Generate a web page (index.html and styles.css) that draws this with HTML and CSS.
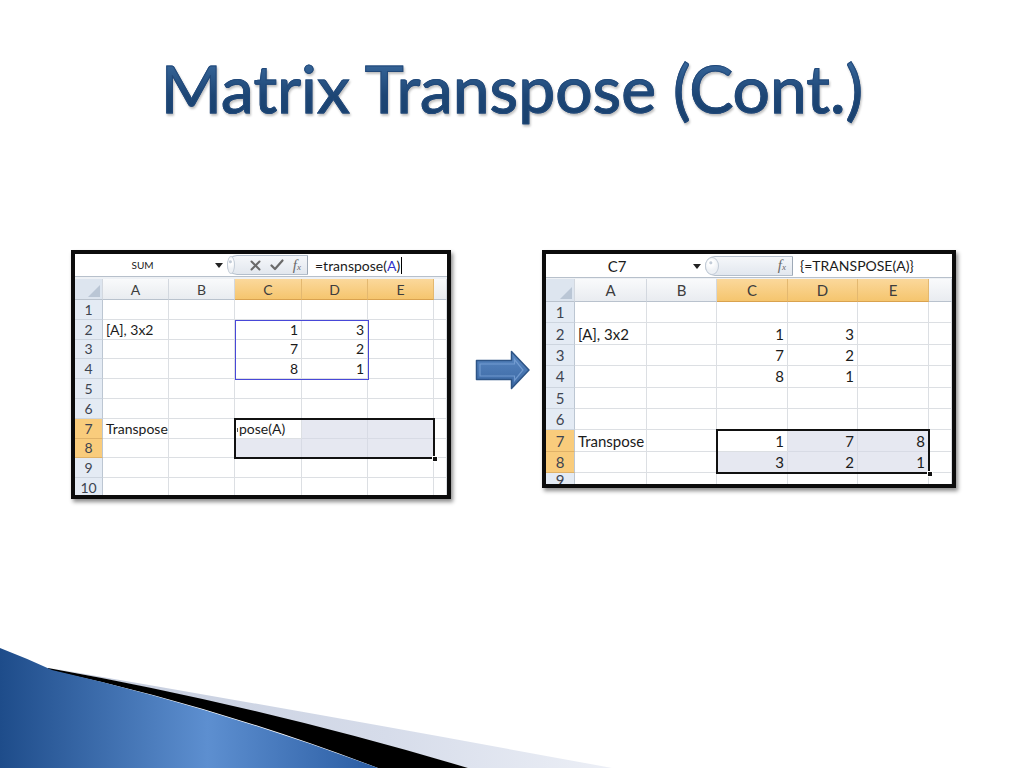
FILE: index.html
```html
<!DOCTYPE html>
<html lang="en">
<head>
    <meta charset="UTF-8">
    <meta name="viewport" content="width=device-width, initial-scale=1.0">
    <title>Matrix Transpose (Cont.)</title>
    <link rel="stylesheet" href="styles.css">
</head>
<body>

<div class="slide">
    <h1 class="title">Matrix Transpose (Cont.)</h1>

    <div class="stage">
        <!-- before: typing the formula -->
        <div class="sheet sheet-a">
            <div class="fbar">
                <div class="namebox small">SUM</div>
                <div class="nb-arrow"><svg width="8" height="5" viewBox="0 0 8 5"><path d="M0 0h8L4 5z" fill="#222"/></svg></div>
                <div class="pill">
                    <span class="knob"></span>
                    <svg class="ico" width="11" height="11" viewBox="0 0 11 11"><path d="M1.5 1.5l8 8M9.5 1.5l-8 8" stroke="#6a6a6a" stroke-width="2" stroke-linecap="round"/></svg>
                    <svg class="ico" width="14" height="12" viewBox="0 0 14 12"><path d="M1.5 6.5l3.5 3.5L12.5 1.5" fill="none" stroke="#6a6a6a" stroke-width="2.2" stroke-linecap="round" stroke-linejoin="round"/></svg>
                    <span class="fx">f<sub>x</sub></span>
                </div>
                <div class="formula">=transpose(<span class="ref">A</span>)<span class="caret"></span></div>
            </div>
            <div class="sep"></div>
            <div class="grid grid-a">
                <div class="hd corner"></div><div class="hd">A</div><div class="hd">B</div><div class="hd sel">C</div><div class="hd sel">D</div><div class="hd sel">E</div><div class="hd"></div>
                <div class="rh">1</div><div class="c"></div><div class="c"></div><div class="c"></div><div class="c"></div><div class="c"></div><div class="c"></div>
                <div class="rh">2</div><div class="c">[A], 3x2</div><div class="c"></div><div class="c n">1</div><div class="c n">3</div><div class="c"></div><div class="c"></div>
                <div class="rh">3</div><div class="c"></div><div class="c"></div><div class="c n">7</div><div class="c n">2</div><div class="c"></div><div class="c"></div>
                <div class="rh">4</div><div class="c"></div><div class="c"></div><div class="c n">8</div><div class="c n">1</div><div class="c"></div><div class="c"></div>
                <div class="rh">5</div><div class="c"></div><div class="c"></div><div class="c"></div><div class="c"></div><div class="c"></div><div class="c"></div>
                <div class="rh">6</div><div class="c"></div><div class="c"></div><div class="c"></div><div class="c"></div><div class="c"></div><div class="c"></div>
                <div class="rh sel">7</div><div class="c">Transpose</div><div class="c"></div><div class="c act edit">pose(A)</div><div class="c f"></div><div class="c f"></div><div class="c"></div>
                <div class="rh sel">8</div><div class="c"></div><div class="c"></div><div class="c f"></div><div class="c f"></div><div class="c f"></div><div class="c"></div>
                <div class="rh">9</div><div class="c"></div><div class="c"></div><div class="c"></div><div class="c"></div><div class="c"></div><div class="c"></div>
                <div class="rh">10</div><div class="c"></div><div class="c"></div><div class="c"></div><div class="c"></div><div class="c"></div><div class="c"></div>

                <div class="ref-box"></div>
                <div class="sel-box sel-a"><span class="handle"></span></div>
            </div>
        </div>

        <svg class="arrow" width="56" height="40" viewBox="0 0 56 40">
            <defs>
                <linearGradient id="ag" x1="0" y1="0" x2="0" y2="1">
                    <stop offset="0" stop-color="#5a88c2"/>
                    <stop offset="1" stop-color="#3a67a3"/>
                </linearGradient>
            </defs>
            <path d="M1.5 10.5h35V1.5L54 20 36.5 38.5v-9h-35z" fill="url(#ag)" stroke="#2d5486" stroke-width="1.5" stroke-linejoin="round"/>
            <path d="M5 14h34.5v-4.5L48 20l-8.5 10.5V26H5z" fill="none" stroke="#7ba3d6" stroke-width="1.2" opacity="0.8"/>
        </svg>

        <!-- after: the array formula entered -->
        <div class="sheet sheet-b">
            <div class="fbar">
                <div class="namebox">C7</div>
                <div class="nb-arrow"><svg width="8" height="5" viewBox="0 0 8 5"><path d="M0 0h8L4 5z" fill="#222"/></svg></div>
                <div class="pill pill-b">
                    <span class="knob"></span>
                    <span class="fx">f<sub>x</sub></span>
                </div>
                <div class="formula">{=TRANSPOSE(A)}</div>
            </div>
            <div class="sep sep-b"></div>
            <div class="grid grid-b">
                <div class="hd corner"></div><div class="hd">A</div><div class="hd">B</div><div class="hd sel">C</div><div class="hd sel">D</div><div class="hd sel">E</div><div class="hd"></div>
                <div class="rh">1</div><div class="c"></div><div class="c"></div><div class="c"></div><div class="c"></div><div class="c"></div><div class="c"></div>
                <div class="rh">2</div><div class="c">[A], 3x2</div><div class="c"></div><div class="c n">1</div><div class="c n">3</div><div class="c"></div><div class="c"></div>
                <div class="rh">3</div><div class="c"></div><div class="c"></div><div class="c n">7</div><div class="c n">2</div><div class="c"></div><div class="c"></div>
                <div class="rh">4</div><div class="c"></div><div class="c"></div><div class="c n">8</div><div class="c n">1</div><div class="c"></div><div class="c"></div>
                <div class="rh">5</div><div class="c"></div><div class="c"></div><div class="c"></div><div class="c"></div><div class="c"></div><div class="c"></div>
                <div class="rh">6</div><div class="c"></div><div class="c"></div><div class="c"></div><div class="c"></div><div class="c"></div><div class="c"></div>
                <div class="rh sel">7</div><div class="c">Transpose</div><div class="c"></div><div class="c n act">1</div><div class="c n f">7</div><div class="c n f">8</div><div class="c"></div>
                <div class="rh sel">8</div><div class="c"></div><div class="c"></div><div class="c n f">3</div><div class="c n f">2</div><div class="c n f">1</div><div class="c"></div>
                <div class="rh last">9</div><div class="c"></div><div class="c"></div><div class="c"></div><div class="c"></div><div class="c"></div><div class="c"></div>

                <div class="sel-box sel-b"><span class="handle"></span></div>
            </div>
        </div>
    </div>

    <svg class="swoosh" width="620" height="122" viewBox="0 0 620 122">
        <defs>
            <linearGradient id="blue" x1="0" y1="0" x2="1" y2="0">
                <stop offset="0" stop-color="#1e4c8a"/>
                <stop offset="0.55" stop-color="#5d8fd0"/>
                <stop offset="1" stop-color="#2a5ca2"/>
            </linearGradient>
            <linearGradient id="band" x1="0" y1="0" x2="1" y2="0">
                <stop offset="0" stop-color="#c3cbdc"/>
                <stop offset="0.6" stop-color="#d6dcea"/>
                <stop offset="1" stop-color="#eceff6"/>
            </linearGradient>
        </defs>
        <path d="M50 22Q320 68 612 122H468Q260 62 50 22z" fill="url(#band)"/>
        <path d="M48 22Q260 60 468 122H378Q210 58 48 24z" fill="#000"/>
        <path d="M0 2Q26 12 52 24Q210 60 378 122H0z" fill="url(#blue)"/>
    </svg>
</div>

</body>
</html>
```

FILE: styles.css
```css
* {
    box-sizing: border-box;
}
body {
    margin: 0;
    background: #fff;
    font-family: Lato, "Open Sans", sans-serif;
}
.slide {
    position: relative;
    width: 1024px;
    height: 768px;
    overflow: hidden;
}
.title {
    margin: 52px 0 0;
    font-size: 66px;
    line-height: 72px;
    font-weight: 400;
    text-align: center;
    color: #24507f;
    background: linear-gradient(#3f70a5, #1d4675 60%, #18406d);
    -webkit-background-clip: text;
    background-clip: text;
    -webkit-text-fill-color: transparent;
    -webkit-text-stroke: 1px #22497a;
    filter: drop-shadow(1px 2px 1px rgba(0, 0, 0, 0.25));
}
.stage {
    display: flex;
    align-items: flex-start;
    margin-top: 126px;
    padding-left: 71px;
}

/* spreadsheet window */
.sheet {
    border: 4px solid #0c0c0c;
    background: #fff;
    box-shadow: 2px 3px 4px rgba(0, 0, 0, 0.45);
    color: #1b1b1b;
    font-size: 14px;
}
.sheet-a {
    width: 380px;
}
.sheet-b {
    width: 414px;
    margin-left: 11px;
    font-size: 15px;
}
.arrow {
    margin: 100px 0 0 24px;
    flex: none;
}
.fbar {
    display: flex;
    align-items: center;
    height: 22px;
    background: #fff;
}
.sheet-b .fbar {
    height: 23px;
}
.namebox {
    width: 135px;
    text-align: center;
    font-size: 15px;
}
.namebox.small {
    font-size: 10px;
}
.sheet-b .namebox {
    width: 142px;
}
.nb-arrow {
    width: 17px;
    display: flex;
    justify-content: center;
    padding-top: 1px;
}
.pill {
    width: 81px;
    height: 20px;
    display: flex;
    align-items: center;
    gap: 9px;
    padding-right: 6px;
    border: 1px solid #b4bfcc;
    border-right: 1px solid #9ea9b6;
    border-radius: 11px 0 0 11px;
    background: linear-gradient(#f5f7fa, #e2e7ee);
}
.pill-b {
    width: 88px;
    justify-content: space-between;
}
.knob {
    width: 14px;
    height: 18px;
    margin-left: -1px;
    border-radius: 50%;
    border: 1px solid #c3ccd7;
    background: radial-gradient(circle at 40% 30%, #c3ccd8 1px, #fff 2px, #eef1f5 60%);
    margin-right: 6px;
}
.ico {
    flex: none;
}
.fx {
    font-family: "Liberation Serif", serif;
    font-style: italic;
    font-size: 15px;
    color: #6a6a6a;
    line-height: 1;
}
.fx sub {
    font-size: 9px;
    vertical-align: 0;
}
.formula {
    flex: 1;
    padding-left: 7px;
    font-size: 14px;
    display: flex;
    align-items: center;
    white-space: nowrap;
}
.formula .ref {
    color: #3232c8;
}
.caret {
    display: inline-block;
    width: 1px;
    height: 17px;
    margin-left: 1px;
    background: #000;
}
.sep {
    height: 3px;
    border-top: 1px solid #b7c0cb;
    background: #eef1f5;
}
.sep-b {
    height: 2px;
}

/* cell grid */
.grid {
    position: relative;
    display: grid;
    overflow: hidden;
}
.grid-a {
    grid-template-columns: 28px 66px 66px 67px 66px 66px 13px;
    grid-template-rows: 21px repeat(10, 19.8px);
    height: 216px;
}
.grid-b {
    grid-template-columns: 29px 72px 70px 71px 70px 71px 23px;
    grid-template-rows: 23px repeat(9, 21.4px);
    height: 205px;
}
.hd {
    display: flex;
    align-items: center;
    justify-content: center;
    color: #3d3d3d;
    background: linear-gradient(#f9fafb, #e9ecf0);
    border-right: 1px solid #d3d8df;
    border-bottom: 1px solid #b9c2cd;
}
.hd.sel {
    background: linear-gradient(#fbd89b, #f5c56e);
    border-right-color: #e3b870;
    border-bottom-color: #d9a24f;
}
.corner {
    position: relative;
    background: #dde5ef;
}
.corner::after {
    content: "";
    position: absolute;
    right: 2px;
    bottom: 2px;
    border-style: solid;
    border-width: 0 0 12px 12px;
    border-color: transparent transparent #bac6d5 transparent;
}
.rh {
    display: flex;
    align-items: center;
    justify-content: center;
    color: #3d4450;
    background: #e4ebf4;
    border-right: 1px solid #bcc6d2;
    border-bottom: 1px solid #cdd5df;
}
.rh.sel {
    background: #f9cc7c;
    border-bottom-color: #e0b268;
}
.rh.last {
    align-items: flex-start;
    line-height: 14px;
}
.c {
    display: flex;
    align-items: center;
    padding: 0 3px;
    white-space: nowrap;
    border-right: 1px solid #dcdfe3;
    border-bottom: 1px solid #dcdfe3;
}
.c.n {
    justify-content: flex-end;
}
.c.f {
    background: #e6e8f1;
    border-color: #d8dbe5;
}
.c.act {
    background: #fff;
}
.c.edit {
    padding-left: 3px;
}
.c.edit::before {
    content: "";
    width: 1px;
    height: 4px;
    margin: 4px 1px 0 -1px;
    background: #555;
}

/* range outlines drawn over the cells */
.ref-box {
    position: absolute;
    left: 160px;
    top: 40.8px;
    width: 134px;
    height: 60.4px;
    border: 1px solid #4848d8;
}
.sel-box {
    position: absolute;
    border: 2.5px solid #111;
}
.sel-a {
    left: 159px;
    top: 138.6px;
    width: 201px;
    height: 41.4px;
}
.sel-b {
    left: 170px;
    top: 150.2px;
    width: 214px;
    height: 44.6px;
}
.handle {
    position: absolute;
    right: -5px;
    bottom: -5px;
    width: 6px;
    height: 6px;
    background: #111;
    border: 1px solid #fff;
}

.swoosh {
    position: absolute;
    left: 0;
    bottom: 0;
}
```
